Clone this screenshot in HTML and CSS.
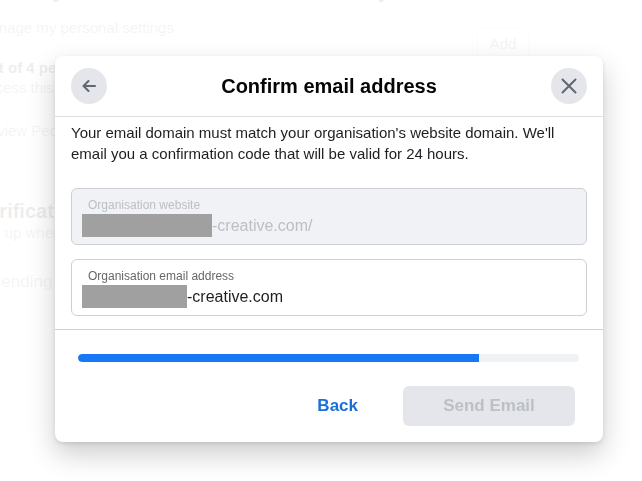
FILE: index.html
```html
<!DOCTYPE html>
<html lang="en">
<head>
<meta charset="utf-8">
<title>Confirm email address</title>
<link rel="stylesheet" href="styles.css">
</head>
<body>
<div class="page">
  <div class="page-main">
    <div class="bg-h1">Protect your business and take control of your assets</div>
    <div class="bg-text bg-manage">Manage my personal settings</div>
    <div class="bg-bold bg-out">Out of 4 people have access</div>
    <div class="bg-text">Access this business</div>
    <div class="bg-text bg-review">Review People</div>
    <div class="bg-h2">Verification</div>
    <div class="bg-text">Set up when you are ready</div>
    <div class="bg-pending">Pending</div>
  </div>
  <div class="page-side">
    <span class="bg-add">Add</span>
  </div>
</div>

<div class="overlay">
  <div class="modal" role="dialog" aria-label="Confirm email address">
    <div class="modal-header">
      <button class="circle-btn" aria-label="Back">
        <svg width="20" height="20" viewBox="0 0 20 20"><path d="M16 10H4.5M9.5 5L4.5 10l5 5" fill="none" stroke="#606770" stroke-width="2" stroke-linecap="round" stroke-linejoin="round"/></svg>
      </button>
      <h2 class="modal-title">Confirm email address</h2>
      <button class="circle-btn" aria-label="Close">
        <svg width="20" height="20" viewBox="0 0 20 20"><path d="M3.5 3.5l13 13M16.5 3.5l-13 13" fill="none" stroke="#606770" stroke-width="2" stroke-linecap="round"/></svg>
      </button>
    </div>
    <div class="modal-body">
      <p class="intro">Your email domain must match your organisation's website domain. We'll email you a confirmation code that will be valid for 24 hours.</p>
      <div class="field field-disabled">
        <div class="field-label">Organisation website</div>
        <div class="field-value"><span class="redact redact-wide"></span>-creative.com/</div>
      </div>
      <div class="field">
        <div class="field-label">Organisation email address</div>
        <div class="field-value"><span class="redact redact-narrow"></span>-creative.com</div>
      </div>
    </div>
    <div class="modal-footer">
      <div class="progress"><div class="progress-fill" style="width:80%"></div></div>
      <div class="actions">
        <button class="btn-link">Back</button>
        <button class="btn-disabled" disabled>Send Email</button>
      </div>
    </div>
  </div>
</div>
</body>
</html>
```

FILE: styles.css
```css
* { box-sizing: border-box; }
html, body { margin: 0; padding: 0; }
body {
  width: 642px;
  height: 481px;
  overflow: hidden;
  font-family: "Liberation Sans", Arial, sans-serif;
  background: #fff;
  color: #1c1e21;
}

/* background page */
.page {
  display: flex;
  height: 481px;
}
.page-main {
  width: 484px;
  flex: none;
  margin-left: -22px;
  margin-top: -21px;
  white-space: nowrap;
  overflow: hidden;
}
.bg-h1 { font-size: 20px; font-weight: bold; line-height: 24px; color: #050505; }
.bg-text { font-size: 15px; line-height: 20px; color: #65676b; }
.bg-manage { margin-top: 15px; }
.bg-bold { font-size: 15px; font-weight: bold; line-height: 20px; color: #050505; }
.bg-out { margin-top: 20px; }
.bg-review { margin-top: 23px; }
.bg-h2 { font-size: 20px; font-weight: bold; line-height: 24px; color: #050505; margin-top: 58px; margin-left: -2px; }
.bg-pending { font-size: 17px; line-height: 22px; color: #65676b; margin-top: 28px; margin-left: 12px; }
.page-side {
  flex: 1;
  padding: 28px 0 0 14px;
  border-left: 1px solid #e4e6eb;
  height: 40px;
}
.bg-add {
  display: inline-block;
  width: 52px;
  height: 32px;
  line-height: 30px;
  text-align: center;
  border: 1px solid #ccd0d5;
  border-radius: 6px;
  font-size: 15px;
  color: #65676b;
}

/* overlay */
.overlay {
  position: fixed;
  inset: 0;
  background: rgba(255, 255, 255, 0.93);
  padding: 56px 0 0 55px;
}
.modal {
  width: 548px;
  background: #fff;
  border-radius: 8px;
  box-shadow: 0 12px 28px 0 rgba(0, 0, 0, 0.2), 0 2px 4px 0 rgba(0, 0, 0, 0.1);
}
.modal-header {
  height: 61px;
  display: flex;
  align-items: center;
  padding: 0 16px;
  border-bottom: 1px solid #dadde1;
}
.circle-btn {
  width: 36px;
  height: 36px;
  border-radius: 50%;
  border: 0;
  padding: 0;
  background: #e4e6eb;
  display: flex;
  align-items: center;
  justify-content: center;
  flex: none;
}
.modal-title {
  flex: 1;
  margin: 0;
  text-align: center;
  font-size: 20px;
  line-height: 24px;
  font-weight: bold;
  color: #050505;
}
.modal-body {
  padding: 5px 16px 13px;
  border-bottom: 1px solid #ced0d4;
}
.intro {
  margin: 0 0 24px;
  font-size: 15px;
  line-height: 21px;
  color: #1c1e21;
}
.field {
  border: 1px solid #ccd0d5;
  border-radius: 6px;
  padding: 8px 10px 7px;
  background: #fff;
}
.field + .field { margin-top: 14px; }
.field-disabled { background: #f0f2f5; }
.field-label {
  padding-left: 6px;
  font-size: 12px;
  line-height: 16px;
  color: #65676b;
}
.field-disabled .field-label { color: #bcc0c4; }
.field-value {
  display: flex;
  align-items: center;
  height: 23px;
  margin-top: 1px;
  font-size: 16px;
  color: #1c1e21;
}
.field-disabled .field-value { color: #bcc0c4; }
.redact {
  display: inline-block;
  height: 23px;
  background: #a0a0a0;
}
.redact-wide { width: 130px; }
.redact-narrow { width: 105px; }

.modal-footer {
  padding: 24px 24px 16px 23px;
}
.progress {
  height: 8px;
  border-radius: 4px;
  background: #f0f2f5;
  overflow: hidden;
}
.progress-fill {
  height: 100%;
  background: #1877f2;
  border-radius: 4px 0 0 4px;
}
.actions {
  display: flex;
  justify-content: flex-end;
  align-items: center;
  gap: 25px;
  margin-top: 24px;
  margin-right: 4px;
}
.btn-link, .btn-disabled {
  font-family: "Liberation Sans", Arial, sans-serif;
  font-size: 17px;
  font-weight: bold;
  height: 40px;
  border: 0;
  border-radius: 6px;
}
.btn-link {
  background: transparent;
  color: #1b6fd8;
  padding: 0 20px;
}
.btn-disabled {
  width: 172px;
  background: #e4e6eb;
  color: #bcc0c4;
}
```
